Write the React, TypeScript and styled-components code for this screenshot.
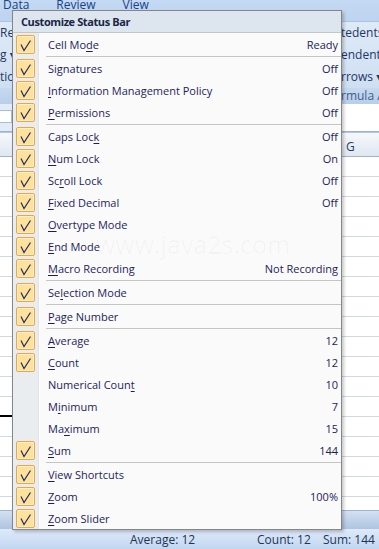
import React from "react";
import styled, { createGlobalStyle } from "styled-components";

interface MenuEntry {
  label: string;
  key: number;
  value?: string;
  checked: boolean;
}

// null marks a separator line
const entries: (MenuEntry | null)[] = [
  { label: "Cell Mode", key: 7, value: "Ready", checked: true },
  null,
  { label: "Signatures", key: 2, value: "Off", checked: true },
  { label: "Information Management Policy", key: 0, value: "Off", checked: true },
  { label: "Permissions", key: 0, value: "Off", checked: true },
  null,
  { label: "Caps Lock", key: 8, value: "Off", checked: true },
  { label: "Num Lock", key: 0, value: "On", checked: true },
  { label: "Scroll Lock", key: 2, value: "Off", checked: true },
  { label: "Fixed Decimal", key: 0, value: "Off", checked: true },
  { label: "Overtype Mode", key: 0, checked: true },
  { label: "End Mode", key: 0, checked: true },
  { label: "Macro Recording", key: 0, value: "Not Recording", checked: true },
  null,
  { label: "Selection Mode", key: 2, checked: true },
  null,
  { label: "Page Number", key: 0, checked: true },
  null,
  { label: "Average", key: 0, value: "12", checked: true },
  { label: "Count", key: 0, value: "12", checked: true },
  { label: "Numerical Count", key: 14, value: "10", checked: false },
  { label: "Minimum", key: 1, value: "7", checked: false },
  { label: "Maximum", key: 2, value: "15", checked: false },
  { label: "Sum", key: 0, value: "144", checked: true },
  null,
  { label: "View Shortcuts", key: 0, checked: true },
  { label: "Zoom", key: 0, value: "100%", checked: true },
  { label: "Zoom Slider", key: 0, checked: true },
];

const GlobalStyle = createGlobalStyle`
  html, body {
    margin: 0;
    padding: 0;
  }
  body {
    width: 379px;
    height: 549px;
    overflow: hidden;
    background: #ffffff;
    font-family: "Open Sans", "Noto Sans", "DejaVu Sans", sans-serif;
  }
`;

const Screen = styled.div`
  position: relative;
  width: 379px;
  height: 549px;
  overflow: hidden;
  display: flex;
  flex-direction: column;
  font-size: 12px;
`;

/* ---- excel window behind the menu ---- */

const TabStrip = styled.div`
  flex: none;
  height: 21px;
  display: flex;
  gap: 27px;
  padding-left: 3px;
  background: linear-gradient(#c4d9f3, #bdd3ef);
  color: #15428b;
  line-height: 12px;
`;

const Tab = styled.span`
  margin-top: -1px;
`;

const Ribbon = styled.div`
  flex: none;
  height: 83px;
  box-sizing: border-box;
  display: flex;
  flex-direction: column;
  border-top: 1px solid #a9c3e4;
  background: linear-gradient(#dfeaf7, #cbdcf1);
`;

const RibbonBody = styled.div`
  flex: 1;
  display: flex;
  justify-content: space-between;
`;

const RibbonCol = styled.div<{ $width: number }>`
  width: ${(p) => p.$width}px;
  overflow: hidden;
  display: flex;
  flex-direction: column;
`;

const RibbonItem = styled.div`
  height: 22px;
  line-height: 22px;
  white-space: nowrap;
  color: #1e3764;
`;

const GroupLabel = styled.div`
  height: 16px;
  line-height: 16px;
  display: flex;
  justify-content: flex-end;
  background: linear-gradient(#c6d9f0, #b9cee9);
  color: #3e5f8e;
  white-space: nowrap;
`;

const FormulaBar = styled.div`
  flex: none;
  height: 28px;
  box-sizing: border-box;
  display: flex;
  align-items: flex-start;
  border-bottom: 1px solid #9db4d0;
  background: #e2ebf6;
`;

const NameBox = styled.div`
  width: 12px;
  height: 13px;
  margin-top: 6px;
  box-sizing: border-box;
  border: 1px solid #a7bcd6;
  border-left: none;
  background: #ffffff;
`;

const FormulaInput = styled.div`
  flex: 1;
  align-self: stretch;
  margin-left: 20px;
  background: #ffffff;
`;

const HeaderRow = styled.div`
  flex: none;
  height: 25px;
  display: flex;
`;

const ColHead = styled.div<{ $selected?: boolean }>`
  box-sizing: border-box;
  height: 25px;
  line-height: 27px;
  overflow: hidden;
  white-space: nowrap;
  ${(p) =>
    p.$selected
      ? `
    width: 12px;
    background: linear-gradient(#f9dfa9, #f3c46c);
    border-bottom: 2px solid #000000;
    color: #4a3a1a;
    text-indent: -1px;
  `
      : `
    flex: 1;
    padding-left: 346px;
    margin-left: -12px;
    background: linear-gradient(#f6f8fc, #dfe7f2);
    border-top: 1px solid #b4c6de;
    border-bottom: 1px solid #9fb3cd;
    color: #2b3d5c;
  `}
`;

const Grid = styled.div`
  flex: 1;
  overflow: hidden;
  display: flex;
  flex-direction: column;
`;

const GridRow = styled.div`
  flex: none;
  height: 20px;
  display: flex;
`;

const Cell = styled.div<{ $edge?: boolean; $wide?: boolean }>`
  box-sizing: border-box;
  height: 20px;
  ${(p) => (p.$wide ? "flex: 1;" : "width: 12px;")}
  border-bottom: ${(p) => (p.$edge ? "2px solid #000000" : "1px solid #d0d7e5")};
  background: #ffffff;
`;

const ScrollBand = styled.div`
  flex: none;
  height: 18px;
  border-top: 1px solid #9db4d2;
  background: linear-gradient(#d3e0f1, #aec4e1);
`;

const StatusBar = styled.div`
  flex: none;
  height: 20px;
  display: flex;
  align-items: center;
  padding-left: 130px;
  background: linear-gradient(#dfeafa, #c2d6f0);
  color: #1f3556;
  white-space: nowrap;
`;

const StatusItem = styled.span<{ $width?: number }>`
  ${(p) => (p.$width ? `width: ${p.$width}px;` : "")}
`;

/* ---- the popup menu ---- */

const Menu = styled.div`
  position: absolute;
  left: 12px;
  top: 10px;
  width: 330px;
  box-sizing: border-box;
  border: 1px solid #868686;
  background: #fafafa;
  box-shadow: 2px 2px 3px rgba(0, 0, 0, 0.22);
  color: #1d1d5e;
  font-size: 11px;
`;

const MenuTitle = styled.div`
  height: 22px;
  box-sizing: border-box;
  padding-left: 8px;
  line-height: 21px;
  border-bottom: 1px solid #c5c5c5;
  background: #dde6ee;
  color: #1b2547;
  font-weight: bold;
  letter-spacing: -0.4px;
`;

const MenuBody = styled.div`
  position: relative;
  background: linear-gradient(
    to right,
    #e9edf0 0 25px,
    #e2e3e3 25px 26px,
    #ffffff 26px 27px,
    #fafafa 27px
  );
`;

const Row = styled.div`
  height: 22px;
  display: flex;
  align-items: center;
`;

const CheckSlot = styled.div`
  width: 25px;
  height: 22px;
  flex: none;
  display: flex;
  align-items: center;
  justify-content: center;
`;

const CheckBox = styled.span`
  width: 19px;
  height: 19px;
  box-sizing: border-box;
  border: 1px solid #f0a447;
  border-radius: 2px;
  background: #fee29c;
  box-shadow: inset 0 0 0 1px #fff0c8;
`;

const Label = styled.span`
  flex: 1;
  margin-left: 10px;
  white-space: nowrap;
`;

const Key = styled.span`
  text-decoration: underline;
  text-underline-offset: 2px;
`;

const Value = styled.span`
  padding-right: 3px;
  white-space: nowrap;
`;

const Separator = styled.div`
  height: 1px;
  margin: 1px 0 0 33px;
  background: #c5c5c5;
`;

const Watermark = styled.div`
  position: absolute;
  left: 83px;
  top: 194px;
  font-size: 25px;
  color: rgba(0, 0, 0, 0.03);
  pointer-events: none;
  white-space: nowrap;
`;

const Check = () => (
  <svg width="17" height="17" viewBox="0 0 17 17" style={{ display: "block" }}>
    <path d="M4 8.5 L7 14.5 L13.5 4.5" fill="none" stroke="#202a6c" strokeWidth="1.2" />
  </svg>
);

const MenuRow = ({ entry }: { entry: MenuEntry }) => (
  <Row>
    <CheckSlot>
      {entry.checked && (
        <CheckBox>
          <Check />
        </CheckBox>
      )}
    </CheckSlot>
    <Label>
      {entry.label.slice(0, entry.key)}
      <Key>{entry.label[entry.key]}</Key>
      {entry.label.slice(entry.key + 1)}
    </Label>
    {entry.value && <Value>{entry.value}</Value>}
  </Row>
);

const App = () => {
  const rows = Array.from({ length: 18 }, (_, i) => i);

  return (
    <>
      <GlobalStyle />
      <Screen>
        <TabStrip>
          <Tab>Data</Tab>
          <Tab>Review</Tab>
          <Tab>View</Tab>
        </TabStrip>
        <Ribbon>
          <RibbonBody>
            <RibbonCol $width={12}>
              <RibbonItem>Re</RibbonItem>
              <RibbonItem>g ▾</RibbonItem>
              <RibbonItem>tio</RibbonItem>
            </RibbonCol>
            <RibbonCol $width={38}>
              <RibbonItem>tedents</RibbonItem>
              <RibbonItem>endents</RibbonItem>
              <RibbonItem>rrows ▾</RibbonItem>
            </RibbonCol>
          </RibbonBody>
          <GroupLabel>
            <RibbonCol $width={38}>rmula Au</RibbonCol>
          </GroupLabel>
        </Ribbon>
        <FormulaBar>
          <NameBox />
          <FormulaInput />
        </FormulaBar>
        <HeaderRow>
          <ColHead $selected>co</ColHead>
          <ColHead>G</ColHead>
        </HeaderRow>
        <Grid>
          {rows.map((i) => (
            <GridRow key={i}>
              <Cell $edge={i === 12} />
              <Cell $wide />
            </GridRow>
          ))}
        </Grid>
        <ScrollBand />
        <StatusBar>
          <StatusItem $width={127}>Average: 12</StatusItem>
          <StatusItem $width={66}>Count: 12</StatusItem>
          <StatusItem>Sum: 144</StatusItem>
        </StatusBar>

        <Menu>
          <MenuTitle>Customize Status Bar</MenuTitle>
          <MenuBody>
            {entries.map((entry, i) =>
              entry ? <MenuRow key={i} entry={entry} /> : <Separator key={i} />
            )}
            <Watermark>www.java2s.com</Watermark>
          </MenuBody>
        </Menu>
      </Screen>
    </>
  );
};

export default App;
